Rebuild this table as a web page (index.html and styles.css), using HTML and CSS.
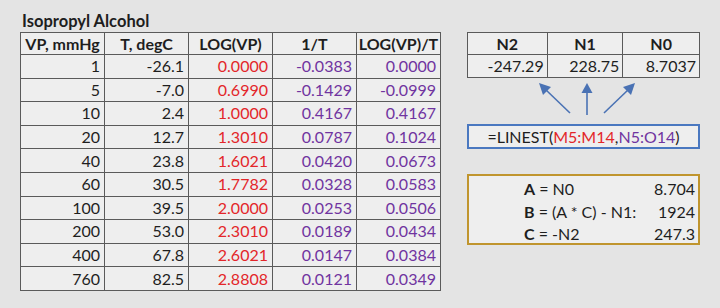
FILE: index.html
```html
<!DOCTYPE html>
<html>
<head>
<meta charset="utf-8">
<link rel="stylesheet" href="styles.css">
</head>
<body>
<div class="page">
  <section class="left">
    <div class="title">Isopropyl Alcohol</div>
    <table class="data">
      <thead>
        <tr><th>VP, mmHg</th><th>T, degC</th><th>LOG(VP)</th><th>1/T</th><th>LOG(VP)/T</th></tr>
      </thead>
      <tbody>
        <tr><td>1</td><td>-26.1</td><td class="red">0.0000</td><td class="pur">-0.0383</td><td class="pur">0.0000</td></tr>
        <tr><td>5</td><td>-7.0</td><td class="red">0.6990</td><td class="pur">-0.1429</td><td class="pur">-0.0999</td></tr>
        <tr><td>10</td><td>2.4</td><td class="red">1.0000</td><td class="pur">0.4167</td><td class="pur">0.4167</td></tr>
        <tr><td>20</td><td>12.7</td><td class="red">1.3010</td><td class="pur">0.0787</td><td class="pur">0.1024</td></tr>
        <tr><td>40</td><td>23.8</td><td class="red">1.6021</td><td class="pur">0.0420</td><td class="pur">0.0673</td></tr>
        <tr><td>60</td><td>30.5</td><td class="red">1.7782</td><td class="pur">0.0328</td><td class="pur">0.0583</td></tr>
        <tr><td>100</td><td>39.5</td><td class="red">2.0000</td><td class="pur">0.0253</td><td class="pur">0.0506</td></tr>
        <tr><td>200</td><td>53.0</td><td class="red">2.3010</td><td class="pur">0.0189</td><td class="pur">0.0434</td></tr>
        <tr><td>400</td><td>67.8</td><td class="red">2.6021</td><td class="pur">0.0147</td><td class="pur">0.0384</td></tr>
        <tr><td>760</td><td>82.5</td><td class="red">2.8808</td><td class="pur">0.0121</td><td class="pur">0.0349</td></tr>
      </tbody>
    </table>
  </section>
  <section class="right">
    <table class="coef">
      <thead><tr><th class="c1">N2</th><th class="c2">N1</th><th class="c3">N0</th></tr></thead>
      <tbody><tr><td>-247.29</td><td>228.75</td><td>8.7037</td></tr></tbody>
    </table>
    <svg class="arrows" width="233" height="46" viewBox="0 0 233 46">
      <g stroke="#4a72b4" stroke-width="1.6" fill="none">
        <line x1="103" y1="35" x2="78" y2="11"/>
        <line x1="120" y1="37" x2="120" y2="13"/>
        <line x1="137" y1="35" x2="162" y2="11"/>
      </g>
      <g fill="#4a72b4">
        <polygon points="72,5 84,9 76,17"/>
        <polygon points="120,5 125.5,15 114.5,15"/>
        <polygon points="168,5 156,9 164,17"/>
      </g>
    </svg>
    <div class="formula">=LINEST(<span class="red">M5:M14</span>,<span class="pur">N5:O14</span>)</div>
    <div class="consts">
      <div class="crow"><span class="lbl"><b>A</b> = N0</span><span class="val">8.704</span></div>
      <div class="crow"><span class="lbl"><b>B</b> = (A * C) - N1:</span><span class="val">1924</span></div>
      <div class="crow"><span class="lbl"><b>C</b> = -N2</span><span class="val">247.3</span></div>
    </div>
  </section>
</div>
</body>
</html>
```
FILE: styles.css
```css
html, body {
  margin: 0;
  padding: 0;
  background: #e4e4e4;
}
body {
  width: 720px;
  height: 308px;
  overflow: hidden;
  font-family: Lato, "Open Sans", sans-serif;
  color: #1e1e1e;
}
.page {
  display: flex;
  padding: 11px 0 0 20px;
}
.left {
  width: 447px;
}
.title {
  font-weight: bold;
  font-size: 16.5px;
  line-height: 21px;
  padding-left: 2px;
}
table {
  border-collapse: collapse;
  background: #eeeeee;
  font-size: 16px;
}
.data th, .data td {
  border: 1.5px solid #5a5a5a;
  width: 84px;
  padding: 0 4px 0 0;
  box-sizing: border-box;
  height: 23.6px;
  line-height: 20px;
  text-align: right;
}
.data th {
  height: 22px;
  text-align: center;
  padding: 0;
}
.red { color: #e3262a; }
.pur { color: #7034a0; }
.right {
  width: 233px;
  display: flex;
  flex-direction: column;
  padding-top: 21px;
}
.coef th, .coef td {
  border: 1.5px solid #5a5a5a;
  box-sizing: border-box;
  line-height: 20px;
  padding: 0 3px 0 0;
  text-align: right;
}
.coef th {
  text-align: center;
  height: 22px;
  padding: 0;
}
.coef td { height: 23px; }
.coef .c1 { width: 80px; }
.coef .c2 { width: 76px; }
.coef .c3 { width: 77px; }
.arrows {
  display: block;
}
.formula {
  height: 25px;
  box-sizing: border-box;
  border: 2px solid #4a78c0;
  background: #eeeeee;
  font-size: 16px;
  line-height: 21px;
  text-align: center;
}
.consts {
  margin-top: 25px;
  height: 71px;
  box-sizing: border-box;
  border: 2px solid #c0952e;
  background: #eeeeee;
  padding: 2px 3px 0 55px;
  font-size: 16px;
  line-height: 22.5px;
}
.crow {
  display: flex;
  justify-content: space-between;
}
```
